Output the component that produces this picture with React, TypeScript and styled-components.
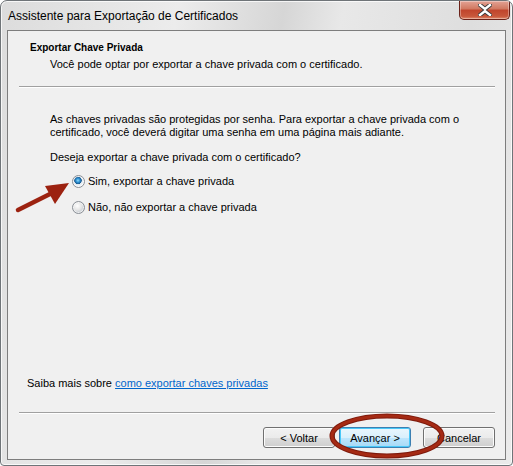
import styled, { createGlobalStyle } from 'styled-components';

const GlobalStyle = createGlobalStyle`
  html, body {
    margin: 0;
    padding: 0;
    background: #ffffff;
  }
  body {
    font-family: "Liberation Sans", Arial, sans-serif;
    font-size: 11px;
    color: #000000;
  }
`;

export default function App() {
  return (
    <>
      <GlobalStyle />
      <Window>
        <TitleBar>
          <Title>Assistente para Exportação de Certificados</Title>
          <CloseButton aria-label="Fechar">
            <svg width="14" height="12" viewBox="0 0 14 12">
              <path
                d="M2 1 L7 5 L12 1 M2 11 L7 7 L12 11"
                stroke="#3b3b3b"
                strokeWidth="4.2"
                fill="none"
                strokeLinecap="square"
              />
              <path
                d="M2 1 L7 5 L12 1 M2 11 L7 7 L12 11"
                stroke="#ffffff"
                strokeWidth="2.4"
                fill="none"
                strokeLinecap="square"
              />
            </svg>
          </CloseButton>
        </TitleBar>
        <Panel>
          <Header>
            <HeaderTitle>Exportar Chave Privada</HeaderTitle>
            <HeaderSub>Você pode optar por exportar a chave privada com o certificado.</HeaderSub>
          </Header>
          <Divider />
          <Body>
            <Paragraph>
              As chaves privadas são protegidas por senha. Para exportar a chave privada com o
              <br />
              certificado, você deverá digitar uma senha em uma página mais adiante.
            </Paragraph>
            <Question>Deseja exportar a chave privada com o certificado?</Question>
            <RadioList>
              <RadioRow>
                <Radio checked />
                <span>Sim, exportar a chave privada</span>
              </RadioRow>
              <RadioRow>
                <Radio />
                <span>Não, não exportar a chave privada</span>
              </RadioRow>
            </RadioList>
          </Body>
          <LearnMore>
            Saiba mais sobre <Link href="#">como exportar chaves privadas</Link>
          </LearnMore>
          <Divider />
          <ButtonRow>
            <Button>&lt; Voltar</Button>
            <Button primary>Avançar &gt;</Button>
            <Button spaced>Cancelar</Button>
          </ButtonRow>
        </Panel>

        <Arrow width="80" height="45" viewBox="0 0 80 45">
          <path d="M8 37 L42 20" stroke="#9c2210" strokeWidth="4.5" strokeLinecap="round" />
          <polygon points="59,10 35,13 45,31" fill="#9c2210" />
        </Arrow>
        <Highlight width="118" height="46" viewBox="0 0 118 46">
          <ellipse cx="59" cy="23" rx="55" ry="20" fill="none" stroke="#7e1a0c" strokeWidth="5" />
          <ellipse cx="59" cy="23" rx="55" ry="20" fill="none" stroke="#a52a14" strokeWidth="3" />
        </Highlight>
      </Window>
    </>
  );
}

const Window = styled.div`
  position: relative;
  box-sizing: border-box;
  width: 513px;
  height: 466px;
  display: flex;
  flex-direction: column;
  border: 1px solid #6f7478;
  border-radius: 7px 7px 4px 4px;
  background: linear-gradient(
    100deg,
    #dcdcdc 0%,
    #ececec 30%,
    #d6d6d6 48%,
    #e8e8e8 58%,
    #dedede 80%,
    #ebebeb 100%
  );
  box-shadow: inset 0 0 0 1px rgba(255, 255, 255, 0.75);
  overflow: hidden;
`;

const TitleBar = styled.div`
  height: 29px;
  display: flex;
  align-items: flex-start;
  justify-content: space-between;
  padding-left: 7px;
  padding-right: 2px;
`;

const Title = styled.div`
  font-size: 12px;
  line-height: 16px;
  margin-top: 7px;
  color: #000000;
`;

const CloseButton = styled.div`
  width: 49px;
  height: 18px;
  display: flex;
  align-items: center;
  justify-content: center;
  border: 1px solid #6b2219;
  border-top: none;
  border-radius: 0 0 5px 5px;
  background: linear-gradient(#e3a395 0%, #d0775f 45%, #c0442c 50%, #c8573b 85%, #e08a6c 100%);
  box-shadow: inset 0 0 0 1px rgba(255, 255, 255, 0.35);
`;

const Panel = styled.div`
  flex: 1;
  display: flex;
  flex-direction: column;
  margin: 0 6px 5px 6px;
  border: 1px solid #7d7d7d;
  background: #f0f0f0;
`;

const Header = styled.div`
  padding: 9px 0 14px 22px;
  line-height: 16px;
`;

const HeaderTitle = styled.div`
  font-weight: 700;
  font-size: 10px;
`;

const HeaderSub = styled.div`
  padding-left: 20px;
`;

const Divider = styled.div`
  margin: 0 10px 0 11px;
  border-top: 1px solid #a0a0a0;
  border-bottom: 1px solid #ffffff;
`;

const Body = styled.div`
  flex: 1;
  padding: 25px 0 0 42px;
`;

const Paragraph = styled.p`
  margin: 0;
  line-height: 13px;
`;

const Question = styled.p`
  margin: 11px 0 0;
  line-height: 14px;
`;

const RadioList = styled.div`
  display: flex;
  flex-direction: column;
  gap: 6px;
  margin-top: 7px;
  padding-left: 22px;
`;

const RadioRow = styled.label`
  display: flex;
  align-items: center;
  gap: 3px;
  height: 20px;
`;

const Radio = styled.span<{ checked?: boolean }>`
  box-sizing: border-box;
  width: 13px;
  height: 13px;
  border-radius: 50%;
  border: 1px solid #8a8f96;
  background: ${p =>
    p.checked
      ? 'radial-gradient(circle at 45% 40%, #8fdcff 0, #2c8fd0 2px, #1a5a90 3.5px, #dfe7ee 4px, #f4f6f8 6px)'
      : 'radial-gradient(circle at 40% 35%, #ffffff 0, #e6e6e6 4px, #cfd3d7 6px)'};
  box-shadow: inset 0 0 0 1px rgba(255, 255, 255, 0.6);
`;

const LearnMore = styled.div`
  padding-left: 19px;
  line-height: 16px;
  margin-bottom: 21px;
`;

const Link = styled.a`
  color: #0066cc;
  text-decoration: underline;
`;

const ButtonRow = styled.div`
  display: flex;
  justify-content: flex-end;
  gap: 4px;
  padding: 13px 10px 11px 0;
`;

const Button = styled.button<{ primary?: boolean; spaced?: boolean }>`
  box-sizing: border-box;
  width: 72px;
  height: 21px;
  padding: 0;
  margin-left: ${p => (p.spaced ? '8px' : '0')};
  font-family: "Liberation Sans", Arial, sans-serif;
  font-size: 11px;
  color: #000000;
  border-radius: 3px;
  border: 1px solid ${p => (p.primary ? '#3c7fb1' : '#707070')};
  background: ${p =>
    p.primary
      ? 'linear-gradient(#eaf6fd 0%, #d9f0fc 50%, #bee6fd 50%, #a7d9f5 100%)'
      : 'linear-gradient(#f2f2f2 0%, #ebebeb 50%, #dddddd 50%, #cfcfcf 100%)'};
  box-shadow: inset 0 0 0 1px ${p => (p.primary ? '#48c8f8' : '#fcfcfc')};
`;

const Arrow = styled.svg`
  position: absolute;
  left: 9px;
  top: 172px;
`;

const Highlight = styled.svg`
  position: absolute;
  left: 327px;
  top: 412px;
`;
